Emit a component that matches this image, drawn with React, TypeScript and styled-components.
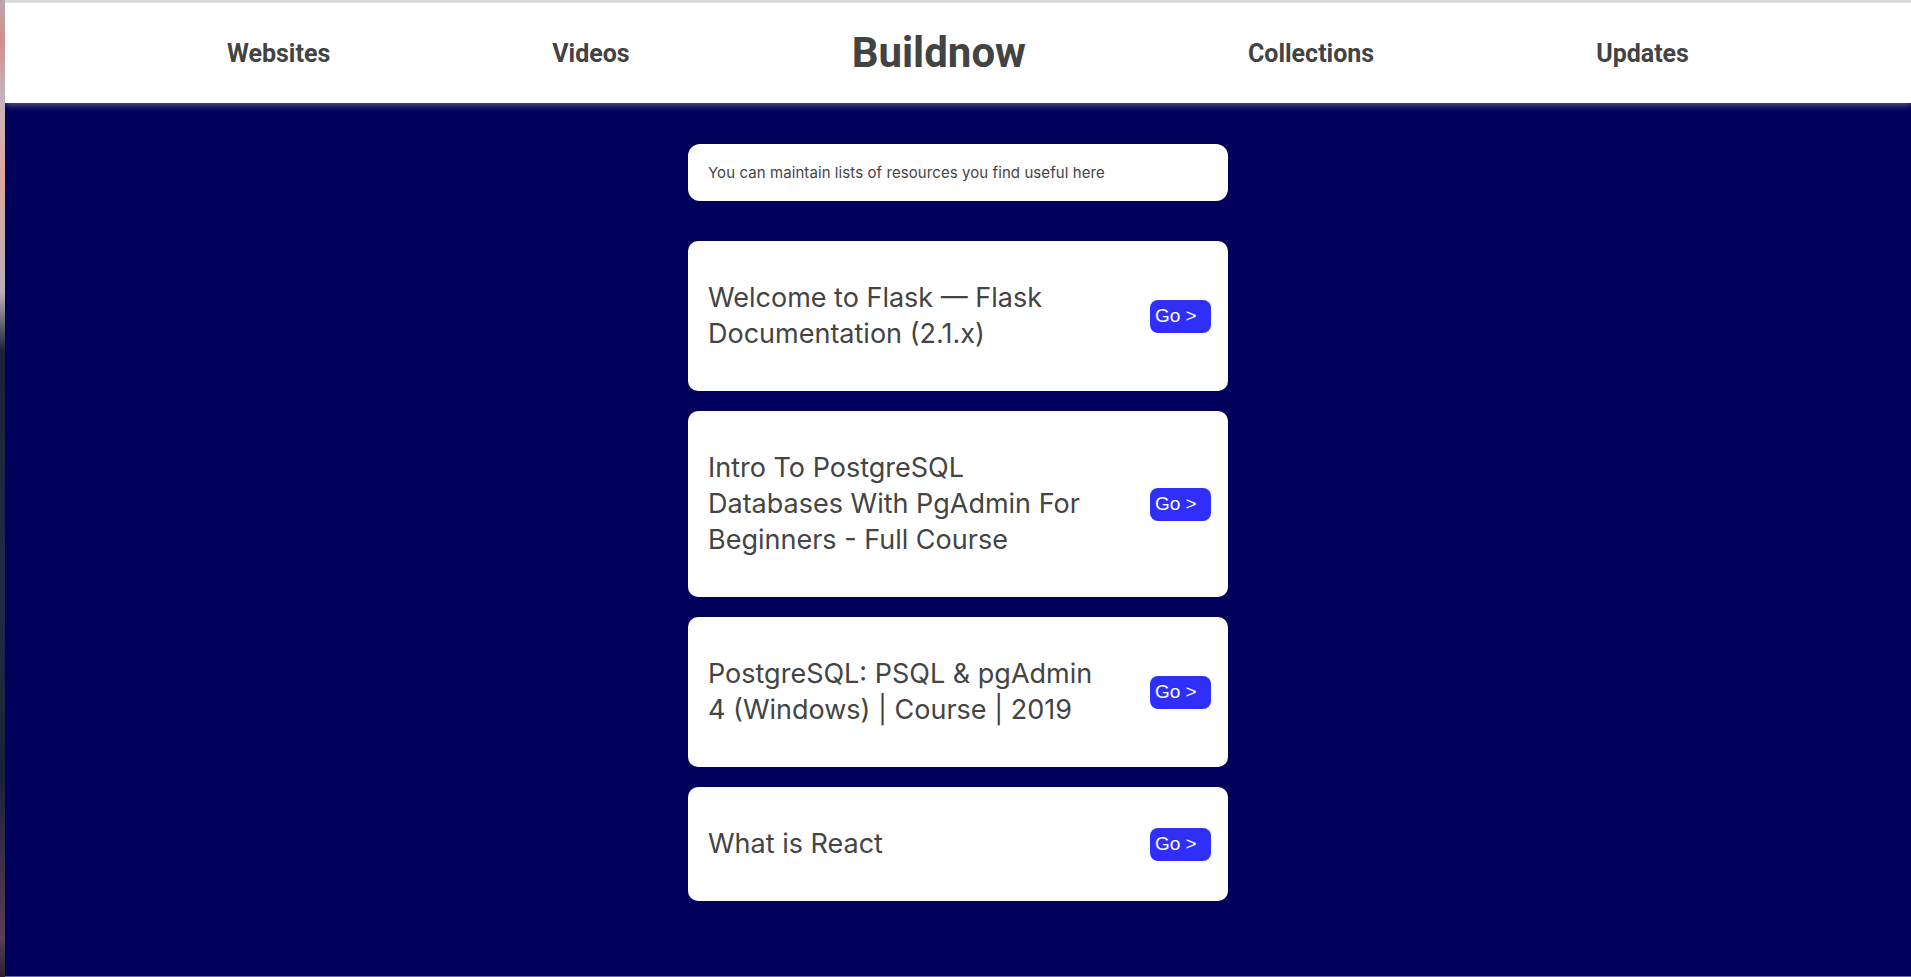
import React from "react";
import styled, { createGlobalStyle } from "styled-components";

const Global = createGlobalStyle`
  html, body {
    margin: 0;
    padding: 0;
    height: 100%;
    background: #01005a;
  }
  #root { height: 100%; }
  * { box-sizing: border-box; }
`;

const Frame = styled.div`
  display: flex;
  height: 100vh;
  overflow: hidden;
`;

const DesktopEdge = styled.div`
  flex: 0 0 5px;
  background: linear-gradient(
    180deg,
    #b9a7b0 0%,
    #d88a86 4%,
    #c9b6bd 10%,
    #e0a79c 18%,
    #b8b2b5 30%,
    #1b2136 36%,
    #222a4a 60%,
    #1a2238 80%,
    #5a4050 96%,
    #2a2030 100%
  );
`;

const Window = styled.div`
  flex: 1;
  display: flex;
  flex-direction: column;
  background: #01005a;
  border-bottom: 1px solid #6a6aa8;
`;

const TabStrip = styled.div`
  height: 3px;
  background: #dedede;
  border-bottom: 1px solid #e8e8e8;
`;

const Header = styled.header`
  position: relative;
  z-index: 1;
  height: 100px;
  background: #ffffff;
  display: flex;
  align-items: center;
  justify-content: space-evenly;
  box-shadow: 0 2px 7px rgba(170, 170, 190, 0.55);
`;

const NavLink = styled.a<{ $logo?: boolean }>`
  font-family: Roboto, "Liberation Sans", sans-serif;
  font-weight: 700;
  font-size: ${(p) => (p.$logo ? "42px" : "25px")};
  color: #434343;
  text-decoration: none;
  cursor: pointer;
  line-height: 1;
`;

const Content = styled.main`
  flex: 1;
  display: flex;
  flex-direction: column;
  align-items: center;
  padding-top: 41px;
`;

const Column = styled.div`
  width: 540px;
  display: flex;
  flex-direction: column;
  gap: 20px;
`;

const InfoBox = styled.div`
  height: 57px;
  margin-bottom: 20px;
  background: #ffffff;
  border-radius: 12px;
  padding: 0 20px;
  display: flex;
  align-items: center;
  font-family: Inter, "Liberation Sans", sans-serif;
  font-size: 15px;
  letter-spacing: 0.08px;
  color: #444444;
`;

const Card = styled.div`
  background: #ffffff;
  border-radius: 10px;
  padding: 39px 17px 39px 20px;
  display: flex;
  align-items: center;
  justify-content: space-between;
`;

const Title = styled.div`
  flex: 0 1 392px;
  font-family: Inter, "Liberation Sans", sans-serif;
  font-size: 27px;
  line-height: 36px;
  font-weight: 400;
  color: #444444;
`;

const GoButton = styled.button`
  width: 61px;
  height: 33px;
  border: none;
  border-radius: 8px;
  background: #2f2ff9;
  color: #ffffff;
  font-family: "Liberation Sans", Arial, sans-serif;
  font-size: 19px;
  text-align: left;
  padding: 0 0 0 5px;
  cursor: pointer;
`;

const resources = [
  "Welcome to Flask — Flask Documentation (2.1.x)",
  "Intro To PostgreSQL Databases With PgAdmin For Beginners - Full Course",
  "PostgreSQL: PSQL & pgAdmin 4 (Windows) | Course | 2019",
  "What is React",
];

export default function App() {
  return (
    <>
      <Global />
      <Frame>
        <DesktopEdge />
        <Window>
          <TabStrip />
          <Header>
            <NavLink>Websites</NavLink>
            <NavLink>Videos</NavLink>
            <NavLink $logo>Buildnow</NavLink>
            <NavLink>Collections</NavLink>
            <NavLink>Updates</NavLink>
          </Header>
          <Content>
            <Column>
              <InfoBox>You can maintain lists of resources you find useful here</InfoBox>
              {resources.map((r) => (
                <Card key={r}>
                  <Title>{r}</Title>
                  <GoButton>Go &gt;</GoButton>
                </Card>
              ))}
            </Column>
          </Content>
        </Window>
      </Frame>
    </>
  );
}
